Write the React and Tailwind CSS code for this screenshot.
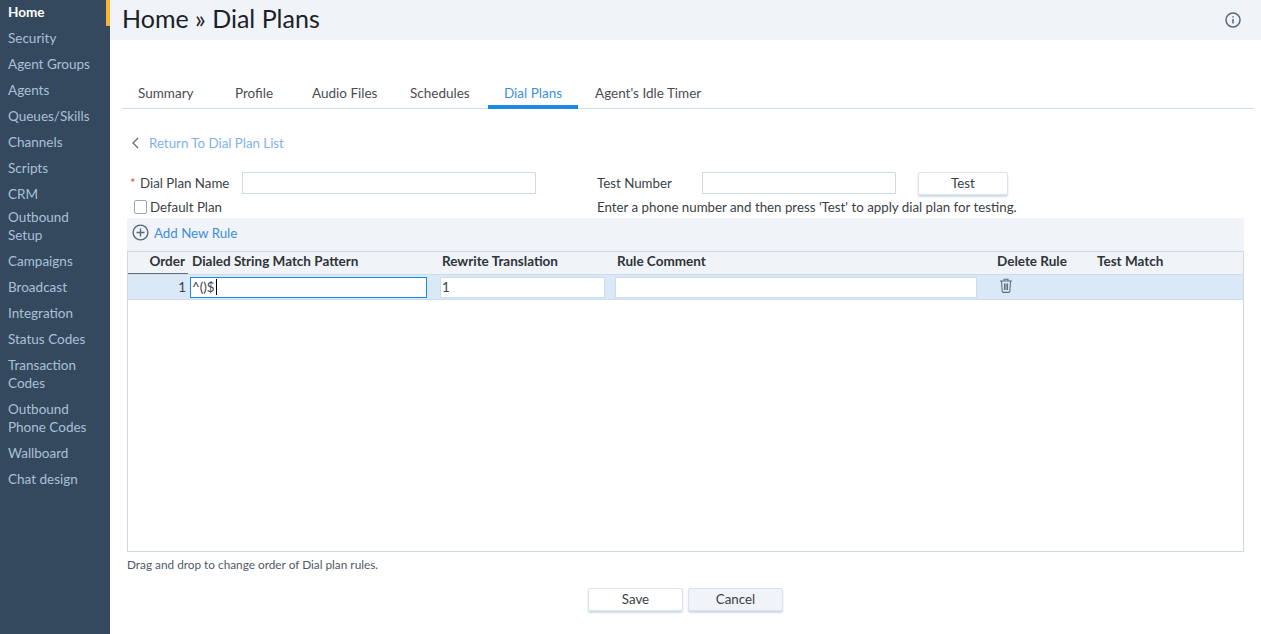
import React from "react";

const nav = ["Home","Security","Agent Groups","Agents","Queues/Skills","Channels","Scripts","CRM","Outbound Setup","Campaigns","Broadcast","Integration","Status Codes","Transaction Codes","Outbound Phone Codes","Wallboard","Chat design"];
const tabs = [
  ["Summary","w-[113px] pl-4"],["Profile","w-[77px]"],["Audio Files","w-[98px]"],["Schedules","w-[78px]"],["Dial Plans","w-[90px] justify-center"],["Agent's Idle Timer","w-[139px] pl-[17px]"],
];

export default function App() {
  return (
    <div className="flex h-[634px] w-[1261px] overflow-hidden bg-white text-[13.3px] leading-[18px] text-[#3a3f45]" style={{fontFamily:'Lato,"Noto Sans",sans-serif'}}>
      <aside className="relative w-[110px] shrink-0 bg-[#34495e] pl-2 pr-3 -mt-px">
        {nav.map((n,i)=>(
          <div key={n} className={`${i===8?"pt-px pb-1":"py-1"} text-[13.5px] leading-[18px] ${i===0?"font-bold text-white":"text-[#a9c0d8]"}`}>{n}</div>
        ))}
        <div className="absolute right-0 top-0 h-[27px] w-1 bg-[#f9b233]" />
      </aside>
      <main className="flex min-w-0 flex-1 flex-col">
        <header className="flex h-10 items-center justify-between bg-[#f0f3f8] pl-3 pr-5">
          <h1 className="text-[25px] font-normal leading-[38px] -mt-[4px] text-[#1c2127]">Home » Dial Plans</h1>
          <svg width="16" height="16" viewBox="0 0 16 16" fill="none" stroke="#56697a" strokeWidth="1.5"><circle cx="8" cy="8" r="7"/><path d="M8 7v4.5M8 4.2v1.3"/></svg>
        </header>
        <div className="ml-3 mr-[7px] mt-[39px] flex h-[30px] border-b border-[#d3dcea] text-[13.5px]">
          {tabs.map(([t,w])=>(
            <div key={t} className={`${w} flex h-[30px] pt-[5px] ${t==="Dial Plans"?"border-b-4 border-[#1e88e5] text-[#3d8fe0]":"text-[#484d52]"}`}>{t}</div>
          ))}
        </div>
        <div className="ml-[21px] mt-[25px] flex items-center gap-[10px] text-[#7fb2ea]">
          <svg width="8" height="12" viewBox="0 0 8 12" fill="none" stroke="#5a6570" strokeWidth="1.2"><path d="M7 1 2 6l5 5"/></svg>
          <span>Return To Dial Plan List</span>
        </div>
        <div className="ml-[17px] mr-[17px] mt-[19px]">
          <div className="flex h-[47px]">
            <div className="w-[470px]">
              <div className="flex h-[24px] items-center">
                <span className="ml-[3px] w-[10px] text-[#e04b4b]">*</span>
                <span className="w-[102px]">Dial Plan Name</span>
                <div className="h-[22px] w-[294px] border border-[#cfdbe8] bg-white" />
              </div>
              <div className="mt-[3px] flex items-center pl-[7px]">
                <div className="h-[14px] w-[13px] rounded-[2px] border border-[#9aa9b8]" />
                <span className="ml-[3px]">Default Plan</span>
              </div>
            </div>
            <div>
              <div className="flex h-[24px] items-center">
                <span className="w-[105px]">Test Number</span>
                <div className="h-[22px] w-[194px] border border-[#cfdbe8] bg-white" />
                <button className="ml-[22px] h-[23px] w-[90px] rounded-[2px] border border-[#dbe3ee] bg-white shadow-[0_2px_2px_#cfdbe8]">Test</button>
              </div>
              <div className="mt-[3px]">Enter a phone number and then press 'Test' to apply dial plan for testing.</div>
            </div>
          </div>
          <div className="flex h-[33px] items-center gap-[5px] bg-[#f0f3f8] pb-1 pl-[5px] text-[#3d8fe0]">
            <svg width="17" height="17" viewBox="0 0 17 17" fill="none" stroke="#56697a" strokeWidth="1.4"><circle cx="8.5" cy="8.5" r="7.4"/><path d="M8.5 4.5v8M4.5 8.5h8"/></svg>
            <span>Add New Rule</span>
          </div>
          <div className="flex h-[301px] flex-col border border-[#cfd9e4] bg-white">
            <div className="flex h-[22px] shrink-0 items-center bg-[#f0f3f8] pb-[5px] text-[13.5px] font-bold text-[#2e3338]">
              <div className="-mb-[5px] flex h-[22px] w-[60px] items-center justify-end border-b border-[#5e6f80] pb-[3px] pr-[3px]">Order</div>
              <div className="w-[254px] pl-1">Dialed String Match Pattern</div>
              <div className="w-[175px]">Rewrite Translation</div>
              <div className="w-[380px]">Rule Comment</div>
              <div className="w-[100px]">Delete Rule</div>
              <div>Test Match</div>
            </div>
            <div className="flex h-[26px] shrink-0 items-center border-y border-[#cfdbe8] bg-[#d9e9f8]">
              <div className="w-[59px] pr-[1px] text-right">1</div>
              <div className="ml-[3px] flex h-[21px] w-[237px] items-center border border-[#1e88e5] bg-white pl-[1px]">^()$<span className="ml-[1px] h-[16px] w-px bg-black" /></div>
              <div className="ml-[13px] flex h-[21px] w-[165px] items-center border border-[#cfdbe8] bg-white pl-[1px]">1</div>
              <div className="ml-[10px] h-[21px] w-[362px] border border-[#cfdbe8] bg-white" />
              <svg className="ml-[22px] mb-[4px]" width="14" height="15" viewBox="0 0 14 15" fill="none" stroke="#5f6e7c" strokeWidth="1.1"><path d="M1 3h12M5 3V1.2h4V3M2.5 3l.7 10.5a1 1 0 0 0 1 .9h5.6a1 1 0 0 0 1-.9L11.5 3M5.5 5.5v6.5M7 5.5v6.5M8.5 5.5v6.5"/></svg>
            </div>
          </div>
          <div className="mt-[4px] text-[11.8px] leading-[18px] text-[#4f5a66]">Drag and drop to change order of Dial plan rules.</div>
        </div>
        <div className="mt-[14px] flex justify-center gap-[5px]">
          <button className="h-[23px] w-[95px] rounded-[2px] border border-[#dbe3ee] bg-white pb-px shadow-[0_2px_2px_#cfdbe8]">Save</button>
          <button className="h-[23px] w-[95px] rounded-[2px] border border-[#dbe3ee] bg-[#f0f3f8] pb-px shadow-[0_2px_2px_#cfdbe8]">Cancel</button>
        </div>
      </main>
    </div>
  );
}
